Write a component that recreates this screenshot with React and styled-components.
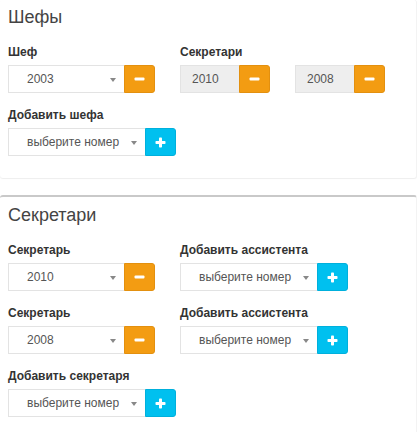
import React from "react";
import styled, { createGlobalStyle } from "styled-components";

const Global = createGlobalStyle`
  html, body { margin: 0; padding: 0; background: #fff; }
  body { font-family: "Liberation Sans", Arial, sans-serif; color: #333; }
  * { box-sizing: border-box; }
`;

const Page = styled.div`
  width: 417px;
`;

const Box = styled.section`
  background: #fff;
  border-top: ${(p) => (p.$flush ? "0" : "2px solid #c9c9c9")};
  border-right: 1px solid #f3f3f3;
  border-radius: 3px;
  box-shadow: 0 1px 1px rgba(0, 0, 0, 0.07);
  margin-bottom: 17px;
  width: 417px;
`;

const Header = styled.div`
  padding: ${(p) => (p.$flush ? "8px" : "9px")} 8px 18px;
`;

const Title = styled.h3`
  margin: 0;
  font-size: 18px;
  line-height: 18px;
  font-weight: 400;
  color: #444;
`;

const Body = styled.div`
  padding: 0 8px 8px;
  display: grid;
  grid-template-columns: 172px 1fr;
`;

const Group = styled.div`
  margin-bottom: 14px;
`;

const Label = styled.div`
  font-size: 12px;
  line-height: 16px;
  font-weight: 700;
  color: #333;
  margin-bottom: 5px;
  white-space: nowrap;
`;

const Inline = styled.div`
  display: flex;
  gap: 25px;
`;

const InputGroup = styled.div`
  display: flex;
  height: 28px;
`;

const Select = styled.div`
  position: relative;
  width: ${(p) => p.$w}px;
  height: 28px;
  border: 1px solid #e3e3e3;
  border-right: 0;
  background: ${(p) => (p.$disabled ? "#eeeeee" : "#fff")};
  padding-left: ${(p) => (p.$disabled ? "11px" : "18px")};
  font-size: 12px;
  line-height: 26px;
  color: #555;
  white-space: nowrap;
`;

const Caret = styled.span`
  position: absolute;
  right: 8px;
  top: 12px;
  width: 0;
  height: 0;
  border-left: 3.5px solid transparent;
  border-right: 3.5px solid transparent;
  border-top: 4px solid #888;
`;

const Btn = styled.button`
  width: 31px;
  height: 28px;
  padding: 0;
  border: 1px solid ${(p) => (p.$kind === "add" ? "#00b0dc" : "#e3900f")};
  background: ${(p) => (p.$kind === "add" ? "#00c0ef" : "#f39c12")};
  border-radius: 0 3px 3px 0;
  display: flex;
  align-items: center;
  justify-content: center;
  cursor: pointer;
`;

const MinusIcon = () => (
  <svg width="11" height="4" viewBox="0 0 11 4">
    <rect x="0.5" y="0.5" width="10" height="3" rx="1" fill="#fff" />
  </svg>
);

const PlusIcon = () => (
  <svg width="11" height="11" viewBox="0 0 11 11">
    <rect x="0.5" y="4" width="10" height="3" rx="0.8" fill="#fff" />
    <rect x="4" y="0.5" width="3" height="10" rx="0.8" fill="#fff" />
  </svg>
);

const Picker = ({ value, w, disabled, kind }) => (
  <InputGroup>
    <Select $w={w} $disabled={disabled}>
      {value}
      {!disabled && <Caret />}
    </Select>
    <Btn $kind={kind}>{kind === "add" ? <PlusIcon /> : <MinusIcon />}</Btn>
  </InputGroup>
);

const PH = "выберите номер";

export default function App() {
  return (
    <Page>
      <Global />
      <Box $flush>
        <Header $flush>
          <Title>Шефы</Title>
        </Header>
        <Body>
          <Group>
            <Label>Шеф</Label>
            <Picker value="2003" w={116} kind="remove" />
          </Group>
          <Group>
            <Label>Секретари</Label>
            <Inline>
              <Picker value="2010" w={59} disabled kind="remove" />
              <Picker value="2008" w={59} disabled kind="remove" />
            </Inline>
          </Group>
          <Group>
            <Label>Добавить шефа</Label>
            <Picker value={PH} w={137} kind="add" />
          </Group>
        </Body>
      </Box>
      <Box>
        <Header>
          <Title>Секретари</Title>
        </Header>
        <Body>
          <Group>
            <Label>Секретарь</Label>
            <Picker value="2010" w={116} kind="remove" />
          </Group>
          <Group>
            <Label>Добавить ассистента</Label>
            <Picker value={PH} w={137} kind="add" />
          </Group>
          <Group>
            <Label>Секретарь</Label>
            <Picker value="2008" w={116} kind="remove" />
          </Group>
          <Group>
            <Label>Добавить ассистента</Label>
            <Picker value={PH} w={137} kind="add" />
          </Group>
          <Group>
            <Label>Добавить секретаря</Label>
            <Picker value={PH} w={137} kind="add" />
          </Group>
        </Body>
      </Box>
    </Page>
  );
}
